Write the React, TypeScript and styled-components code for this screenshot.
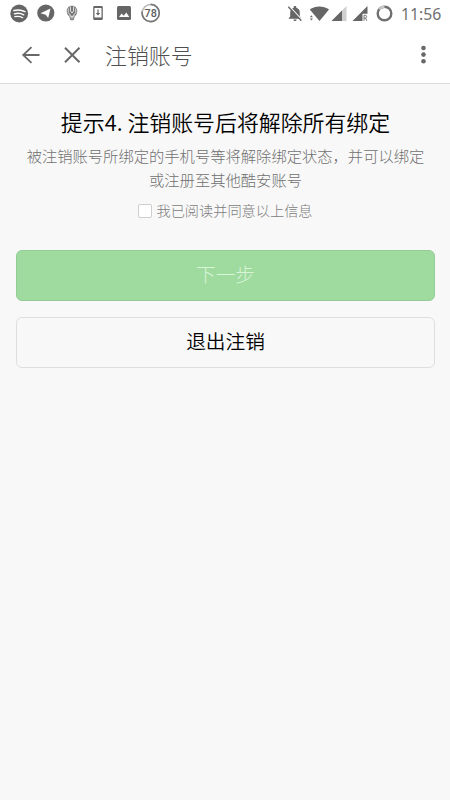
import React from 'react';
import styled, { createGlobalStyle } from 'styled-components';

const GlobalStyle = createGlobalStyle`
  * { box-sizing: border-box; }
  body {
    margin: 0;
    background: #f8f8f8;
    font-family: "Noto Sans CJK SC", "Noto Sans", sans-serif;
    font-weight: 300;
  }
`;

const Screen = styled.div`
  display: flex;
  flex-direction: column;
  width: 450px;
  height: 800px;
  overflow: hidden;
  background: #f8f8f8;
`;

const Header = styled.header`
  height: 84px;
  background: #fff;
  border-bottom: 1px solid #dcdcdc;
`;

const StatusBar = styled.div`
  display: flex;
  align-items: center;
  justify-content: space-between;
  height: 26px;
  padding: 0 9px 0 10px;
  color: #666;
`;

const StatusGroup = styled.div`
  display: flex;
  align-items: center;
`;

const StatusItem = styled.span<{ $before?: number }>`
  display: flex;
  margin-left: ${(p) => p.$before ?? 0}px;
`;

const Clock = styled.time`
  margin-left: 8px;
  width: 40px;
  padding-top: 1px;
  font: 400 15.8px/26px "Noto Sans", sans-serif;
  white-space: nowrap;
  color: #707070;
`;

const Toolbar = styled.div`
  display: flex;
  align-items: center;
  height: 57px;
  padding: 0 15px 0 19px;
  color: #686868;
`;

const ToolButton = styled.button<{ $after?: number }>`
  display: flex;
  width: 24px;
  height: 24px;
  margin: 0 ${(p) => p.$after ?? 0}px 0 0;
  padding: 0;
  border: 0;
  background: none;
  color: inherit;
`;

const PageTitle = styled.h1`
  flex: 1;
  margin: 0;
  font-size: 21.9px;
  font-weight: 300;
  line-height: 32px;
  color: #505050;
`;

const Content = styled.main`
  display: flex;
  flex-direction: column;
  padding: 21px 15px 0 16px;
`;

const Heading = styled.h2`
  margin: 0;
  text-align: center;
  font-size: 21.9px;
  font-weight: 350;
  line-height: 34px;
  color: #000;
  white-space: nowrap;
`;

const Notice = styled.p`
  margin: 4px 0 0;
  text-align: center;
  font-size: 15.3px;
  line-height: 24px;
  color: #707070;
`;

const Agreement = styled.label`
  display: flex;
  align-items: center;
  justify-content: center;
  gap: 4px;
  height: 24px;
  margin-top: 7px;
  font-size: 14.2px;
  line-height: 24px;
  color: #7c7c7c;
`;

const AgreementText = styled.span`
  padding-bottom: 1px;
`;

const Checkbox = styled.input`
  appearance: none;
  width: 14px;
  height: 14px;
  margin: 1px 0 0;
  border: 1px solid #cecece;
  border-radius: 2px;
  background: #fff;
`;

const ActionButton = styled.button<{ $primary?: boolean }>`
  height: 51px;
  margin: ${(p) => (p.$primary ? 28 : 16)}px 0 0;
  padding: 0 0 4px;
  border: 1px solid ${(p) => (p.$primary ? '#93cc95' : '#dedede')};
  border-radius: 6px;
  background: ${(p) => (p.$primary ? '#9fda9f' : '#f8f8f8')};
  color: ${(p) => (p.$primary ? '#d8f5d8' : '#000')};
  font-family: inherit;
  font-size: 19.7px;
  font-weight: ${(p) => (p.$primary ? 300 : 350)};
  line-height: 28px;
`;

const SpotifyIcon = () => (
  <svg width="19" height="19" viewBox="0 0 19 19">
    <circle cx="9.2" cy="9.5" r="8.9" fill="currentColor" />
    <g fill="none" stroke="#fff" strokeLinecap="round">
      <path d="M4 6.6c3.7-1 7.500-.7 10.900 1" strokeWidth="1.600" />
      <path d="M4.400 9.800c3.200-.9 6.600-.5 9.300 1" strokeWidth="1.400" />
      <path d="M4.800 12.700c2.800-.7 5.500-.4 7.900 1" strokeWidth="1.200" />
    </g>
  </svg>
);

const TelegramIcon = () => (
  <svg width="18" height="18" viewBox="0 0 18 18">
    <circle cx="8.800" cy="9" r="8.6" fill="currentColor" />
    <path d="M3.500 9.200 13.500 4.500 11.200 14 8.700 10.700Z" fill="#fff" />
  </svg>
);

const LeafIcon = () => (
  <svg width="12" height="17" viewBox="0 0 12 17">
    <path d="M6 .8c2.800 0 5.300 2.200 5.300 5.200 0 2.500-1.200 4.300-2.400 5.600L7.400 15.200H4.600L3.100 11.600C1.900 10.300.7 8.500.7 6 .7 3 3.200.8 6 .8Z" fill="#777" />
    <path d="M4.400 1.500v4.500L6 8l1.600-2V1.500M2.200 3.400v4.200L6 12l3.800-4.400V3.400M3 10.400l3 3.200 3-3.200" fill="none" stroke="#fff" strokeWidth=".8" />
  </svg>
);

const DownloadIcon = () => (
  <svg width="10" height="14" viewBox="0 0 10 14">
    <path d="M1.500 0h7A1.300 1.300 0 0 1 9.800 1.300v11.400A1.300 1.300 0 0 1 8.500 14h-7A1.300 1.300 0 0 1 .2 12.700V1.300A1.300 1.300 0 0 1 1.500 0Z" fill="currentColor" />
    <path d="M1.500 2h7v9.500h-7Z" fill="#fff" />
    <path d="M4.400 3.500h1.200V7h1.700L5 9.500 2.700 7h1.700Z" fill="currentColor" />
  </svg>
);

const ImageIcon = () => (
  <svg width="14" height="14" viewBox="0 0 14 14">
    <rect width="14" height="14" rx="1.500" fill="currentColor" />
    <path d="m2 11 2.700-3.600 2 2.400L9.300 6.500 12.300 11Z" fill="#fff" />
  </svg>
);

const BatteryBadge = () => (
  <svg width="20" height="20" viewBox="0 0 20 20">
    <circle cx="9.700" cy="10" r="8.600" fill="none" stroke="#b5b5b5" strokeWidth="1.500" />
    <path d="M9.700 1.400a8.600 8.600 0 1 1-8.500 7.200" fill="none" stroke="#777" strokeWidth="1.600" />
    <text x="9.700" y="13.800" textAnchor="middle" fill="#5c5c5c" fontFamily="Roboto, sans-serif" fontSize="10.800" fontWeight="500">78</text>
  </svg>
);

const MutedBellIcon = () => (
  <svg width="16" height="17" viewBox="0 0 16 17">
    <path d="M8 1c.8 0 1.300.5 1.300 1.200v.5c2.300.6 3.500 2.500 3.500 4.800v4l1.400 1.600v.6H1.800v-.6l1.400-1.600v-4c0-2.300 1.200-4.200 3.500-4.800v-.5C6.700 1.500 7.200 1 8 1ZM6.400 14.500h3.200c0 1-.7 1.600-1.600 1.600s-1.600-.6-1.600-1.600Z" fill="currentColor" />
    <path d="m2 .8 13.500 14.500" stroke="#fff" strokeWidth="1.200" />
    <path d="m1.300 1.700 13 14" stroke="currentColor" strokeWidth="1.300" />
  </svg>
);

const WifiIcon = () => (
  <svg width="20" height="17" viewBox="0 0 20 17" fill="currentColor">
    <path d="M.8 4.600C6.300.3 14.500.3 20 4.600L10.500 16Z" />
    <path d="m.9 12.200 1.500-2 1.500 2ZM.9 13.600h3l-1.500 2Z" />
  </svg>
);

const SignalIcon = () => (
  <svg width="16" height="15" viewBox="0 0 16 15">
    <path d="M15.500 0v15H.5Z" fill="#d0d0d0" />
    <path d="M11 4.500V15H.5Z" fill="currentColor" />
  </svg>
);

const RoamingSignalIcon = () => (
  <svg width="16" height="15" viewBox="0 0 16 15">
    <path d="M15.500 0v7.800h-5V15H.5Z" fill="currentColor" />
    <path d="M12 14.800V9.300h1.300a1.300 1.300 0 0 1 0 2.700H12m1.500 0 1.300 2.800" fill="none" stroke="#777" strokeWidth="1" />
  </svg>
);

const BatteryRing = () => (
  <svg width="17" height="17" viewBox="0 0 17 17" fill="none" strokeWidth="2.400">
    <circle cx="8.500" cy="8.500" r="6.800" stroke="#707070" />
    <path d="M3.200 4.300A6.800 6.800 0 0 1 8.500 1.700" stroke="#c8c8c8" />
  </svg>
);

const BackIcon = () => (
  <svg width="24" height="24" viewBox="0 0 24 24" fill="none" stroke="currentColor" strokeWidth="1.800">
    <path d="M20.500 12H4M12.500 4.200 4.200 12l8.300 7.800" />
  </svg>
);

const CloseIcon = () => (
  <svg width="24" height="24" viewBox="0 0 24 24" fill="none" stroke="currentColor" strokeWidth="2">
    <path d="m5 4.800 14.500 14.400M19.500 4.800 5 19.200" />
  </svg>
);

const MoreIcon = () => (
  <svg width="24" height="24" viewBox="0 0 24 24" fill="currentColor">
    <circle cx="12.500" cy="5" r="2.300" />
    <circle cx="12.500" cy="11.600" r="2.300" />
    <circle cx="12.500" cy="18.200" r="2.300" />
  </svg>
);

export default function App() {
  return (
    <>
      <GlobalStyle />
      <Screen>
        <Header>
          <StatusBar>
            <StatusGroup>
              <StatusItem><SpotifyIcon /></StatusItem>
              <StatusItem $before={8}><TelegramIcon /></StatusItem>
              <StatusItem $before={11}><LeafIcon /></StatusItem>
              <StatusItem $before={15}><DownloadIcon /></StatusItem>
              <StatusItem $before={14}><ImageIcon /></StatusItem>
              <StatusItem $before={10}><BatteryBadge /></StatusItem>
            </StatusGroup>
            <StatusGroup>
              <StatusItem><MutedBellIcon /></StatusItem>
              <StatusItem $before={6}><WifiIcon /></StatusItem>
              <StatusItem $before={2}><SignalIcon /></StatusItem>
              <StatusItem $before={5}><RoamingSignalIcon /></StatusItem>
              <StatusItem $before={8}><BatteryRing /></StatusItem>
              <Clock>11:56</Clock>
            </StatusGroup>
          </StatusBar>
          <Toolbar>
            <ToolButton $after={17} aria-label="返回"><BackIcon /></ToolButton>
            <ToolButton $after={21} aria-label="关闭"><CloseIcon /></ToolButton>
            <PageTitle>注销账号</PageTitle>
            <ToolButton aria-label="更多"><MoreIcon /></ToolButton>
          </Toolbar>
        </Header>
        <Content>
          <Heading>提示4. 注销账号后将解除所有绑定</Heading>
          <Notice>
            被注销账号所绑定的手机号等将解除绑定状态，并可以绑定
            <br />
            或注册至其他酷安账号
          </Notice>
          <Agreement>
            <Checkbox type="checkbox" />
            <AgreementText>我已阅读并同意以上信息</AgreementText>
          </Agreement>
          <ActionButton $primary disabled>下一步</ActionButton>
          <ActionButton>退出注销</ActionButton>
        </Content>
      </Screen>
    </>
  );
}
